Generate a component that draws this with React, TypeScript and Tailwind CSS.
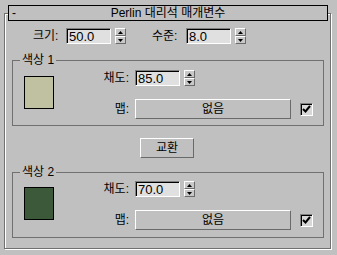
import React from "react";

const sunken =
  "border-t border-l border-t-[#808080] border-l-[#808080] border-b border-r border-b-white border-r-white shadow-[inset_1px_1px_0_#000]";
const raised =
  "border-t border-l border-t-white border-l-white border-b border-r border-b-[#6a6a6a] border-r-[#6a6a6a]";

function Spinner() {
  return (
    <div className="flex h-[16px] w-[11px] flex-col">
      <div className={`flex h-[8px] w-[11px] items-center justify-center bg-[#c8c8c8] ${raised}`}>
        <svg width="5" height="3" viewBox="0 0 5 3">
          <polygon points="2.5,0 5,3 0,3" fill="#000" />
        </svg>
      </div>
      <div className={`flex h-[8px] w-[11px] items-center justify-center bg-[#c8c8c8] ${raised}`}>
        <svg width="5" height="3" viewBox="0 0 5 3">
          <polygon points="0,0 5,0 2.5,3" fill="#000" />
        </svg>
      </div>
    </div>
  );
}

function NumInput({ value }: { value: string }) {
  return (
    <div className={`flex h-[16px] w-[45px] items-center bg-[#e0e0e0] pl-[2px] pt-[1px] ${sunken}`}>
      <span className="text-[13px]">{value}</span>
    </div>
  );
}

function Check() {
  return (
    <div className={`flex h-[13px] w-[13px] items-center justify-center bg-[#d8d8d8] ${sunken}`}>
      <svg width="9" height="8" viewBox="0 0 9 8">
        <path d="M1 4 L3.5 6.5 L8 1" stroke="#000" strokeWidth="2" fill="none" />
      </svg>
    </div>
  );
}

function Group({
  label,
  color,
  amount,
  first,
}: {
  label: string;
  color: string;
  amount: string;
  first: boolean;
}) {
  return (
    <div className="relative ml-[7px] h-[66px] w-[312px] border border-[#707070]">
      <span className="absolute -top-[7px] left-[7px] bg-[#c0c0c0] px-[2px] text-[12px] leading-[13px]">
        {label}
      </span>
      <div className="flex pl-[11px]">
        <div
          className={`${first ? "mt-[15px]" : "mt-[14px]"} h-[33px] w-[30px] shrink-0 border border-black`}
          style={{ backgroundColor: color }}
        />
        <div className={`flex flex-col ${first ? "pt-[9px]" : "pt-[8px]"}`}>
          <div className="flex h-[16px] items-center">
            <span className="w-[81px] shrink-0 pr-[6px] text-right text-[12px]">채도:</span>
            <NumInput value={amount} />
            <div className="ml-[4px]">
              <Spinner />
            </div>
          </div>
          <div className="mt-[13px] flex h-[20px] items-center">
            <span className="w-[81px] shrink-0 pr-[6px] text-right text-[12px]">맵:</span>
            <div className={`flex h-[20px] w-[156px] shrink-0 items-center justify-center bg-[#c0c0c0] ${raised}`}>
              <span className="text-[12px]">없음</span>
            </div>
            <div className="ml-[9px]">
              <Check />
            </div>
          </div>
        </div>
      </div>
    </div>
  );
}

export default function App() {
  return (
    <div className="h-[255px] w-[337px] overflow-hidden bg-[#c0c0c0] pt-[5px] font-['Liberation_Sans','Noto_Sans_CJK_KR',sans-serif] text-[12px] leading-none text-black">
      <div className="relative z-10 mx-[8px] flex h-[16px] w-[320px] items-center border border-black bg-[#c0c0c0]">
        <span className="absolute left-[3px] top-[1px] text-[12px]">-</span>
        <span className="w-full text-center text-[12px]">Perlin 대리석 매개변수</span>
      </div>
      <div className="-mt-[8px] ml-[4px] h-[236px] w-[327px] border border-[#707070] pt-[14px] shadow-[inset_1px_1px_0_#fff,1px_1px_0_#fff]">
        <div className="flex h-[16px] items-center pl-[28px]">
          <span className="w-[33px] text-[12px]">크기:</span>
          <NumInput value="50.0" />
          <div className="ml-[4px]">
            <Spinner />
          </div>
          <span className="ml-[26px] w-[34px] text-[12px]">수준:</span>
          <NumInput value="8.0" />
          <div className="ml-[4px]">
            <Spinner />
          </div>
        </div>
        <div className="mt-[16px]">
          <Group label="색상 1" color="#c0c1a1" amount="85.0" first={true} />
        </div>
        <div className={`ml-[135px] mt-[12px] flex h-[20px] w-[54px] items-center justify-center ${raised}`}>
          <span className="text-[12px]">교환</span>
        </div>
        <div className="mt-[14px]">
          <Group label="색상 2" color="#3c5a3a" amount="70.0" first={false} />
        </div>
      </div>
    </div>
  );
}
